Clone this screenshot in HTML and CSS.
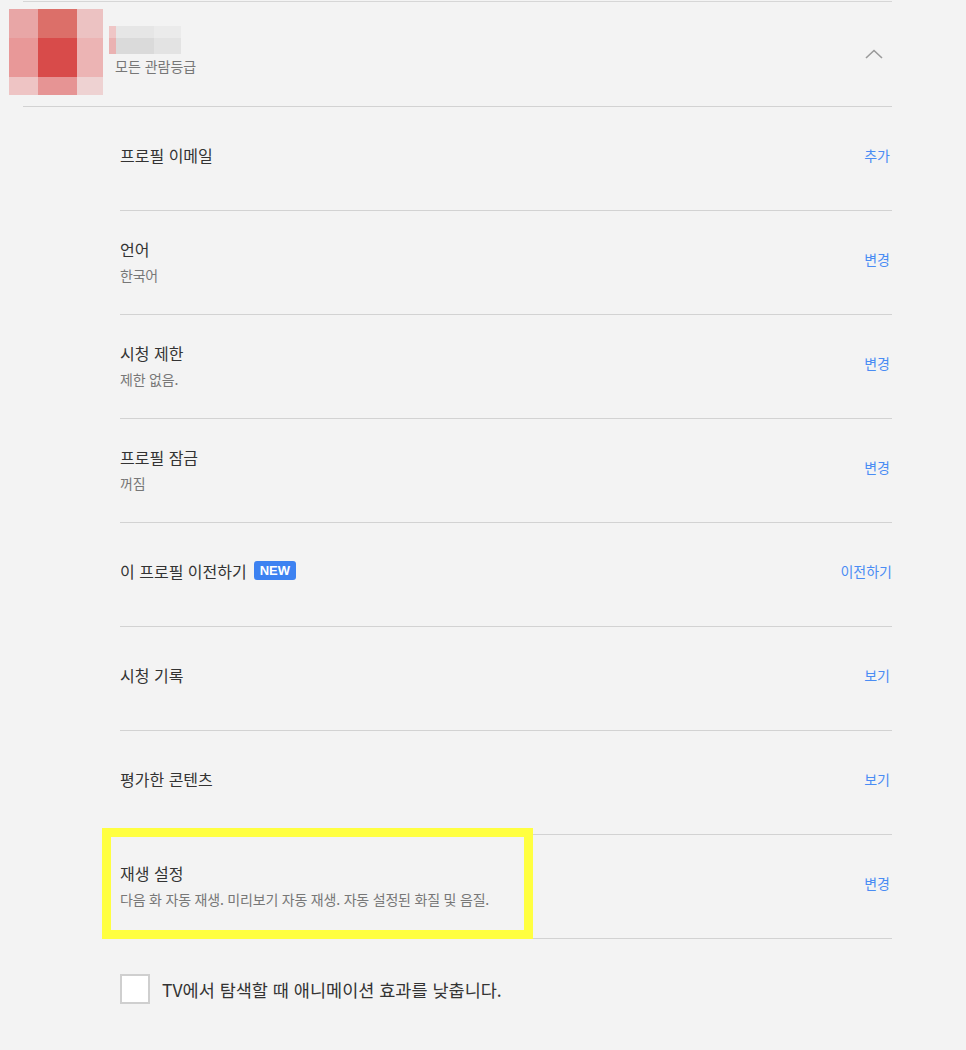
FILE: index.html
```html
<!DOCTYPE html>
<html lang="ko">
<head>
    <meta charset="UTF-8">
    <meta name="viewport" content="width=device-width, initial-scale=1.0">
    <title>프로필 설정</title>
    <link rel="stylesheet" href="styles.css">
</head>
<body>
    <div class="profile">
        <!-- Cabeçalho do perfil -->
        <div class="profile-header">
            <div class="avatar">
                <span class="c11"></span><span class="c12"></span><span class="c13"></span>
                <span class="c21"></span><span class="c22"></span><span class="c23"></span>
                <span class="c31"></span><span class="c32"></span><span class="c33"></span>
            </div>
            <div class="profile-info">
                <div class="name-blur">
                    <span class="b11"></span><span class="b12"></span><span class="b13"></span>
                    <span class="b21"></span><span class="b22"></span><span class="b23"></span>
                </div>
                <div class="maturity">모든 관람등급</div>
            </div>
            <svg class="chevron" width="18" height="10" viewBox="0 0 18 10">
                <polyline points="1,9 9,1.5 17,9" fill="none" stroke="#9a9a9a" stroke-width="1.6"/>
            </svg>
        </div>

        <!-- Linhas de configuração -->
        <div class="settings">
            <div class="row">
                <div class="row-text">
                    <div class="row-title">프로필 이메일</div>
                </div>
                <a class="row-link" href="#">추가</a>
            </div>
            <div class="row">
                <div class="row-text">
                    <div class="row-title">언어</div>
                    <div class="row-sub">한국어</div>
                </div>
                <a class="row-link" href="#">변경</a>
            </div>
            <div class="row">
                <div class="row-text">
                    <div class="row-title">시청 제한</div>
                    <div class="row-sub">제한 없음.</div>
                </div>
                <a class="row-link" href="#">변경</a>
            </div>
            <div class="row">
                <div class="row-text">
                    <div class="row-title">프로필 잠금</div>
                    <div class="row-sub">꺼짐</div>
                </div>
                <a class="row-link" href="#">변경</a>
            </div>
            <div class="row">
                <div class="row-text">
                    <div class="row-title">이 프로필 이전하기 <span class="badge">NEW</span></div>
                </div>
                <a class="row-link wide" href="#">이전하기</a>
            </div>
            <div class="row">
                <div class="row-text">
                    <div class="row-title">시청 기록</div>
                </div>
                <a class="row-link" href="#">보기</a>
            </div>
            <div class="row">
                <div class="row-text">
                    <div class="row-title">평가한 콘텐츠</div>
                </div>
                <a class="row-link" href="#">보기</a>
            </div>
            <div class="row highlighted">
                <div class="row-text">
                    <div class="row-title">재생 설정</div>
                    <div class="row-sub">다음 화 자동 재생. 미리보기 자동 재생. 자동 설정된 화질 및 음질.</div>
                </div>
                <a class="row-link" href="#">변경</a>
                <div class="highlight-box"></div>
            </div>

            <label class="check-row">
                <span class="checkbox"></span>
                <span class="check-text">TV에서 탐색할 때 애니메이션 효과를 낮춥니다.</span>
            </label>
        </div>
    </div>
</body>
</html>
```

FILE: styles.css
```css
/* Base */
body {
    margin: 0;
    padding: 0;
    background-color: #f3f3f3;
    color: #333;
    font-family: "Noto Sans CJK KR", "Noto Sans", sans-serif;
}
a {
    text-decoration: none;
}
.profile {
    margin: 1px 0 0 23px;
    width: 869px;
    border-top: 1px solid #d6d6d6;
}
/* Cabeçalho */
.profile-header {
    display: flex;
    align-items: flex-start;
    height: 104px;
    border-bottom: 1px solid #d2d2d2;
    box-sizing: content-box;
}
.avatar {
    display: grid;
    grid-template-columns: 29px 39px 26px;
    grid-template-rows: 29px 39px 18px;
    margin: 7px 0 0 -14px;
}
.c11 { background: #e8a6a6; }
.c12 { background: #dc6f69; }
.c13 { background: #ecc2c2; }
.c21 { background: #e89898; }
.c22 { background: #d84b4a; }
.c23 { background: #ecb4b4; }
.c31 { background: #eec4c4; }
.c32 { background: #e69494; }
.c33 { background: #eed2d2; }
.profile-info {
    margin: 24px 0 0 6px;
    flex: 1;
}
.name-blur {
    display: grid;
    grid-template-columns: 7px 38px 27px;
    grid-template-rows: 12px 16px;
    width: 72px;
}
.b11 { background: #efc6c6; }
.b12 { background: #e6e6e6; }
.b13 { background: #ebebeb; }
.b21 { background: #eab2b2; }
.b22 { background: #dadada; }
.b23 { background: #e3e3e3; }
.maturity {
    font-size: 14px;
    color: #777;
    margin: 2px 0 0 6px;
    line-height: 20px;
}
.chevron {
    margin: 47px 9px 0 0;
}
/* Linhas */
.settings {
    margin-left: 97px;
}
.row {
    position: relative;
    display: flex;
    align-items: center;
    justify-content: space-between;
    height: 101px;
    padding-bottom: 2px;
    border-bottom: 1px solid #d2d2d2;
    box-sizing: content-box;
}
.row-title {
    font-size: 16px;
    line-height: 22px;
    color: #333;
    display: flex;
    align-items: center;
    gap: 7px;
}
.row-title:only-child {
    margin-bottom: 6px;
}
.row-sub {
    font-size: 14px;
    line-height: 20px;
    color: #777;
    margin-top: 5px;
    letter-spacing: -0.2px;
}
.row-link {
    font-size: 14px;
    color: #4a8cf3;
    padding-right: 2px;
    margin-bottom: 6px;
}
.row-link.wide {
    padding-right: 0;
}
.badge {
    background-color: #3d82f1;
    color: #fff;
    font-family: "Liberation Sans", Arial, sans-serif;
    font-weight: bold;
    font-size: 13px;
    line-height: 19px;
    padding: 0 6px;
    border-radius: 3px;
}
/* Destaque amarelo */
.highlight-box {
    position: absolute;
    left: -18px;
    top: -7px;
    width: 431px;
    height: 111px;
    border: 9px solid #ffff40;
    box-sizing: border-box;
}
/* Checkbox */
.check-row {
    display: flex;
    align-items: center;
    gap: 12px;
    padding-top: 35px;
}
.checkbox {
    width: 30px;
    height: 30px;
    background: #fff;
    border: 2px solid #cfcfcf;
    box-sizing: border-box;
}
.check-text {
    font-size: 17.5px;
    color: #333;
}
```
